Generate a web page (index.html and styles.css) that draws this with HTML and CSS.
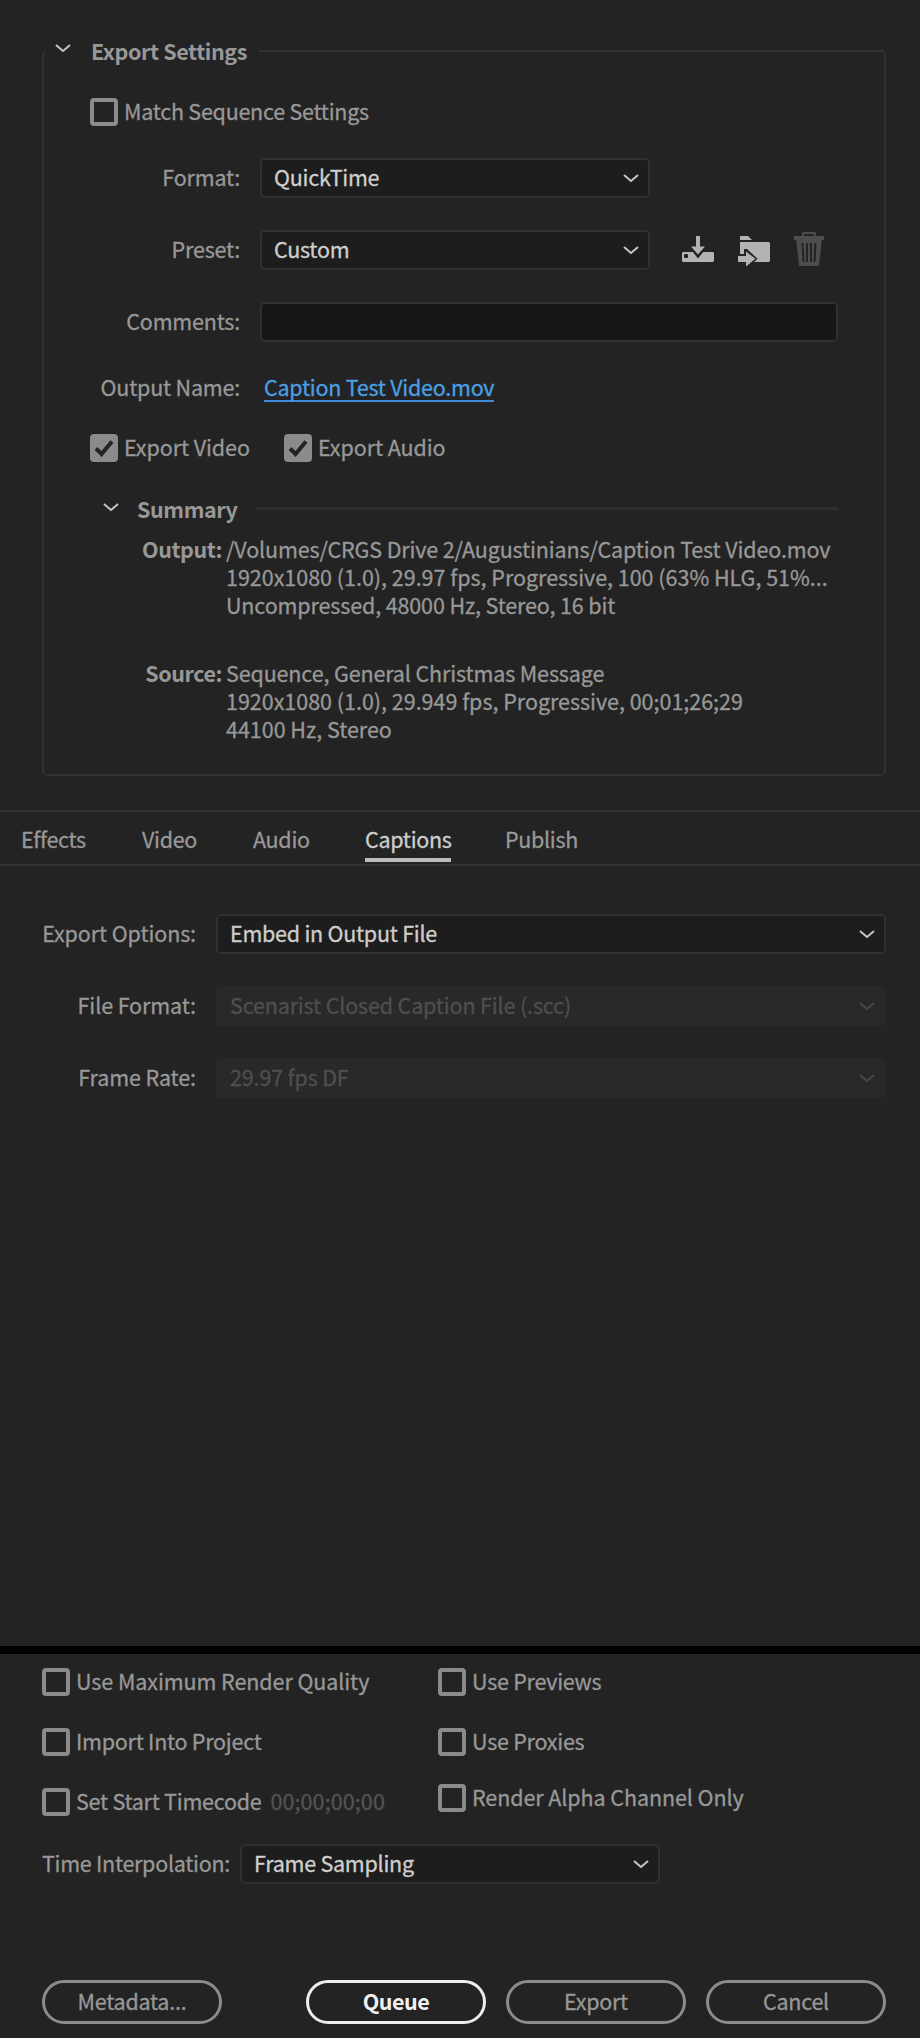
FILE: index.html
```
<!DOCTYPE html>
<html lang="en">
<head>
  <meta charset="UTF-8">
  <title>Export Settings</title>
  <link rel="stylesheet" href="styles.css">
</head>
<body>

  <section class="settings">
    <div class="legend">
      <svg class="chevron" viewBox="0 0 16 8"><path d="M1 1l7 6 7-6"/></svg>
      <h2>Export Settings</h2>
    </div>

    <div class="checks match">
      <label class="check"><span class="box"></span><span class="text">Match Sequence Settings</span></label>
    </div>

    <div class="row">
      <span class="label">Format:</span>
      <div class="select bright">QuickTime
        <svg class="chevron" viewBox="0 0 16 8"><path d="M1 1l7 6 7-6"/></svg>
      </div>
    </div>

    <div class="row">
      <span class="label">Preset:</span>
      <div class="select bright">Custom
        <svg class="chevron" viewBox="0 0 16 8"><path d="M1 1l7 6 7-6"/></svg>
      </div>
      <div class="icons">
        <svg width="32" height="40" viewBox="0 0 32 40">
          <path d="M1 22h30l1 1v8l-1 1H1l-1-1v-8z"/>
          <rect class="cut" x="2" y="24" width="4" height="4" rx="1"/>
          <path class="cut" d="M6.500 16.500L16 28.500l9.500-12z"/>
          <path d="M14 6h4v10.500h5L16 24.500l-7-8h5z"/>
        </svg>
        <svg width="32" height="40" viewBox="0 0 32 40">
          <path d="M2 6h8l4 4H2z"/>
          <path d="M2 12h29l1 1v18l-1 1H2z"/>
          <path class="cut" d="M0 24h6v-5h3l10.500 9.800L9 39H6v-7H0z"/>
          <path d="M0 26h8v-4.500l9.500 7.300L8 36.500V32H0z"/>
        </svg>
        <svg class="off" width="30" height="40" viewBox="0 0 30 40">
          <path d="M8 6V3l1-1h12l1 1v3h-2V4H10v2z"/>
          <path d="M0 6h30v4h-2.200L25 36H5L2.200 10H0z"/>
          <path class="slots" d="M8.500 13l1 19M13 13v19M17 13v19M21.500 13l-1 19"/>
        </svg>
      </div>
    </div>

    <div class="row">
      <span class="label">Comments:</span>
      <div class="input"></div>
    </div>

    <div class="row name">
      <span class="label">Output Name:</span>
      <a class="link">Caption Test Video.mov</a>
    </div>

    <div class="checks">
      <label class="check wide"><span class="box on"><svg viewBox="0 0 20 18"><path d="M2 9.500l5.500 5.500L18 2.500"/></svg></span><span class="text">Export Video</span></label>
      <label class="check wide"><span class="box on"><svg viewBox="0 0 20 18"><path d="M2 9.500l5.500 5.500L18 2.500"/></svg></span><span class="text">Export Audio</span></label>
    </div>

    <div class="summary-head">
      <svg class="chevron" viewBox="0 0 16 8"><path d="M1 1l7 6 7-6"/></svg>
      <h2>Summary</h2>
      <span class="rule"></span>
    </div>

    <div class="info">
      <b>Output:</b>
      <div>
        <p class="path">/Volumes/CRGS Drive 2/Augustinians/Caption Test Video.mov</p>
        <p>1920x1080 (1.0), 29.97 fps, Progressive, 100 (63% HLG, 51%...</p>
        <p class="path">Uncompressed, 48000 Hz, Stereo, 16 bit</p>
      </div>
    </div>
    <div class="info source">
      <b>Source:</b>
      <div>
        <p class="path">Sequence, General Christmas Message</p>
        <p>1920x1080 (1.0), 29.949 fps, Progressive, 00;01;26;29</p>
        <p>44100 Hz, Stereo</p>
      </div>
    </div>
  </section>

  <nav class="tabs">
    <span class="effects">Effects</span>
    <span class="video">Video</span>
    <span class="audio">Audio</span>
    <span class="active">Captions</span>
    <span>Publish</span>
  </nav>

  <section class="captions-panel">
    <div class="row">
      <span class="label">Export Options:</span>
      <div class="select bright">Embed in Output File
        <svg class="chevron" viewBox="0 0 16 8"><path d="M1 1l7 6 7-6"/></svg>
      </div>
    </div>
    <div class="row">
      <span class="label">File Format:</span>
      <div class="select disabled">Scenarist Closed Caption File (.scc)
        <svg class="chevron" viewBox="0 0 16 8"><path d="M1 1l7 6 7-6"/></svg>
      </div>
    </div>
    <div class="row">
      <span class="label">Frame Rate:</span>
      <div class="select disabled">29.97 fps DF
        <svg class="chevron" viewBox="0 0 16 8"><path d="M1 1l7 6 7-6"/></svg>
      </div>
    </div>
  </section>

  <footer class="bottom">
    <div class="options">
      <div class="column">
        <label class="check wide"><span class="box"></span><span class="text">Use Maximum Render Quality</span></label>
        <label class="check"><span class="box"></span><span class="text">Import Into Project</span></label>
        <label class="check"><span class="box"></span><span class="text">Set Start Timecode</span><span class="text timecode">00;00;00;00</span></label>
      </div>
      <div class="column">
        <label class="check"><span class="box"></span><span class="text">Use Previews</span></label>
        <label class="check"><span class="box"></span><span class="text">Use Proxies</span></label>
        <label class="check wide alpha"><span class="box"></span><span class="text">Render Alpha Channel Only</span></label>
      </div>
    </div>

    <div class="row time">
      <span class="label">Time Interpolation:</span>
      <div class="select bright">Frame Sampling
        <svg class="chevron" viewBox="0 0 16 8"><path d="M1 1l7 6 7-6"/></svg>
      </div>
    </div>

    <div class="buttons">
      <button class="metadata">Metadata...</button>
      <button class="primary">Queue</button>
      <button>Export</button>
      <button>Cancel</button>
    </div>
  </footer>

</body>
</html>
```
FILE: styles.css
```
* {
  box-sizing: border-box;
}

body {
  margin: 0;
  height: 2038px;
  padding-top: 50px;
  background-color: #232323;
  color: #989898;
  font-family: "Noto Sans CJK SC", "Noto Sans", sans-serif;
  font-size: 21.5px;
  line-height: 28px;
  letter-spacing: -0.25px;
  white-space: nowrap;
  -webkit-text-stroke: 0.3px;
  display: flex;
  flex-direction: column;
}

h2, p {
  margin: 0;
}

h2 {
  padding-top: 2px;
  font-size: inherit;
  letter-spacing: -0.4px;
}

h2, b {
  -webkit-text-stroke: 0;
}

svg {
  display: block;
  flex: none;
}

.chevron {
  width: 16px;
  height: 8px;
  fill: none;
  stroke: #c4c4c4;
  stroke-width: 2;
}

/* export settings group */
.settings {
  height: 726px;
  margin: 0 34px 0 42px;
  border: 2px solid #303030;
  border-radius: 5px;
}

.legend {
  display: flex;
  align-items: center;
  width: 212px;
  height: 28px;
  margin: -16px 0 0 2px;
  padding-left: 9px;
  background-color: #232323;
}

.legend .chevron {
  margin: 0 20px 4px 0;
}

.checks {
  display: flex;
  gap: 34px;
  margin: 32px 0 0 46px;
}

.checks.match {
  margin-top: 34px;
}

.check {
  display: flex;
  height: 28px;
}

.checks .check:first-child:not(:last-child) {
  width: 160px;
}

.box {
  flex: none;
  width: 28px;
  height: 28px;
  margin-right: 6px;
  border: 4px solid #8b8b8b;
  border-radius: 4px;
}

.box.on {
  background-color: #8b8b8b;
}

.box.on svg {
  width: 20px;
  height: 18px;
  margin-top: 1px;
  fill: none;
  stroke: #232323;
  stroke-width: 4;
}

.text {
  margin-top: -1px;
}

.row {
  display: flex;
  align-items: center;
  height: 40px;
  margin-top: 32px;
}

.label {
  width: 196px;
  margin-right: 20px;
  padding-bottom: 3px;
  text-align: right;
  letter-spacing: -0.2px;
}

.select {
  display: flex;
  align-items: center;
  justify-content: space-between;
  width: 390px;
  height: 40px;
  padding: 0 9px 3px 12px;
  border: 2px solid #303030;
  border-radius: 5px;
  background-color: #1d1d1d;
}

.select .chevron {
  position: relative;
  top: 1px;
}

.bright {
  color: #cecece;
}

.disabled {
  border-color: #292929;
  background-color: #292929;
  color: #4f4f4f;
  letter-spacing: -0.15px;
}

.disabled .chevron {
  stroke: #484848;
}

.input {
  width: 578px;
  height: 40px;
  border: 2px solid #303030;
  border-radius: 5px;
  background-color: #161616;
}

.icons {
  display: flex;
  gap: 24px;
  margin-left: 32px;
  fill: #b3b3b3;
}

.icons .cut {
  fill: #232323;
}

.icons .off {
  fill: #4d4d4d;
}

.icons .slots {
  fill: none;
  stroke: #232323;
  stroke-width: 2;
}

.row.name {
  height: 30px;
  margin-top: 30px;
}

.row.name .label {
  padding-bottom: 0;
}

.link {
  height: 30px;
  padding-top: 1px;
  margin-left: 4px;
  border-bottom: 2px solid #3d8ddb;
  color: #4a9fe3;
}

.summary-head {
  display: flex;
  align-items: center;
  height: 28px;
  margin: 32px 0 0 59px;
}

.summary-head .chevron {
  margin: 0 18px 3px 0;
}

.rule {
  width: 581px;
  height: 3px;
  margin: 0 46px 0 auto;
  background-color: #2e2e2e;
}

.info {
  display: flex;
  gap: 4px;
  margin-top: 13px;
  letter-spacing: -0.02px;
}

.info b {
  width: 178px;
  text-align: right;
  letter-spacing: -0.45px;
}

.info .path {
  letter-spacing: -0.13px;
}

.info.source {
  margin-top: 40px;
}

/* tabs */
.tabs {
  display: flex;
  height: 56px;
  margin-top: 34px;
  padding: 12px 0 0 21px;
  border-top: 2px solid #303030;
  border-bottom: 2px solid #303030;
}

.tabs span {
  height: 38px;
  padding-top: 1px;
  letter-spacing: -0.3px;
}

.tabs .effects {
  width: 121px;
}

.tabs .video {
  width: 111px;
}

.tabs .audio {
  width: 112px;
}

.tabs .active {
  width: 86px;
  margin-right: 54px;
  border-bottom: 4px solid #bdbdbd;
  color: #cecece;
}

/* captions tab */
.captions-panel {
  flex: 1;
  padding-top: 16px;
}

.captions-panel .label {
  letter-spacing: -0.1px;
}

.captions-panel .select {
  width: 670px;
}

/* bottom bar */
.bottom {
  height: 392px;
  padding: 14px 34px 0 42px;
  border-top: 8px solid #000;
}

.options {
  display: flex;
}

.column {
  display: flex;
  flex-direction: column;
  gap: 32px;
  width: 396px;
}

.alpha {
  margin-top: -4px;
}

.wide {
  letter-spacing: -0.08px;
}

.timecode {
  margin-left: 9px;
  color: #545454;
  letter-spacing: 0.1px;
}

.row.time {
  margin-top: 28px;
}

.time .label {
  width: 189px;
  margin-right: 9px;
  text-align: left;
  letter-spacing: -0.28px;
}

.time .select {
  width: 420px;
}

.buttons {
  display: flex;
  gap: 20px;
  margin-top: 96px;
}

button {
  width: 180px;
  height: 44px;
  padding: 0 0 3px;
  border: 3px solid #8b8b8b;
  border-radius: 22px;
  background: none;
  color: inherit;
  font: inherit;
  letter-spacing: inherit;
}

.metadata {
  margin-right: 64px;
}

.primary {
  border-color: #ececec;
  color: #f0f0f0;
  font-weight: bold;
  letter-spacing: -0.5px;
  -webkit-text-stroke: 0;
}
```
